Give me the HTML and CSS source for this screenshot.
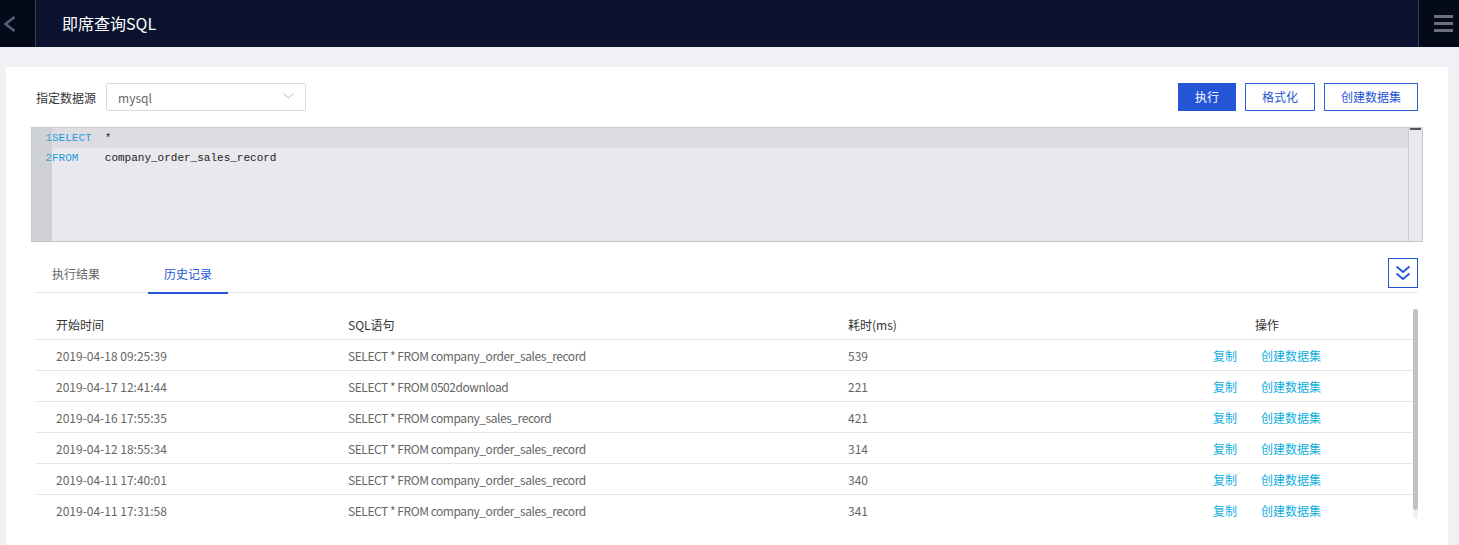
FILE: index.html
```html
<!DOCTYPE html>
<html lang="zh-CN">
<head>
<meta charset="utf-8">
<title>即席查询SQL</title>
<link rel="stylesheet" href="styles.css">
</head>
<body>
<header class="topbar">
  <div class="back">
    <svg width="13" height="16" viewBox="0 0 13 16"><path d="M11.5 1 L2.5 8 L11.5 15" fill="none" stroke="#5b6172" stroke-width="2.4"/></svg>
  </div>
  <h1 class="title">即席查询SQL</h1>
  <div class="menu"><span></span><span></span><span></span></div>
</header>
<main class="page">
  <section class="panel">
    <div class="toolbar">
      <span class="ds-label">指定数据源</span>
      <div class="select">
        <span class="select-value">mysql</span>
        <svg class="select-arrow" width="11" height="6" viewBox="0 0 11 6"><path d="M0.5 0.5 L5.5 5 L10.5 0.5" fill="none" stroke="#b8b8b8" stroke-width="1"/></svg>
      </div>
      <div class="actions">
        <button class="btn btn-primary">执行</button>
        <button class="btn">格式化</button>
        <button class="btn">创建数据集</button>
      </div>
    </div>

    <div class="editor">
      <div class="gutter">
        <div class="ln">1</div>
        <div class="ln">2</div>
      </div>
      <div class="code">
        <div class="line active"><span class="kw">SELECT</span>  *</div>
        <div class="line"><span class="kw">FROM</span>    company_order_sales_record</div>
      </div>
      <div class="editor-scroll"><div class="editor-thumb"></div></div>
    </div>

    <div class="tabs">
      <div class="tab">执行结果</div>
      <div class="tab tab-active">历史记录</div>
      <button class="collapse">
        <svg width="16" height="16" viewBox="0 0 16 16"><path d="M1.5 1.5 L8 7 L14.5 1.5 M1.5 8.5 L8 14 L14.5 8.5" fill="none" stroke="#2355d6" stroke-width="1.8"/></svg>
      </button>
    </div>

    <div class="table-wrap">
      <div class="table">
        <div class="row head">
          <div class="c">开始时间</div>
          <div class="c">SQL语句</div>
          <div class="c">耗时(ms)</div>
          <div class="c ops">操作</div>
        </div>
        <div class="row">
          <div class="c">2019-04-18 09:25:39</div>
          <div class="c sql">SELECT * FROM company_order_sales_record</div>
          <div class="c">539</div>
          <div class="c ops"><a>复制</a><a>创建数据集</a></div>
        </div>
        <div class="row">
          <div class="c">2019-04-17 12:41:44</div>
          <div class="c sql">SELECT * FROM 0502download</div>
          <div class="c">221</div>
          <div class="c ops"><a>复制</a><a>创建数据集</a></div>
        </div>
        <div class="row">
          <div class="c">2019-04-16 17:55:35</div>
          <div class="c sql">SELECT * FROM company_sales_record</div>
          <div class="c">421</div>
          <div class="c ops"><a>复制</a><a>创建数据集</a></div>
        </div>
        <div class="row">
          <div class="c">2019-04-12 18:55:34</div>
          <div class="c sql">SELECT * FROM company_order_sales_record</div>
          <div class="c">314</div>
          <div class="c ops"><a>复制</a><a>创建数据集</a></div>
        </div>
        <div class="row">
          <div class="c">2019-04-11 17:40:01</div>
          <div class="c sql">SELECT * FROM company_order_sales_record</div>
          <div class="c">340</div>
          <div class="c ops"><a>复制</a><a>创建数据集</a></div>
        </div>
        <div class="row">
          <div class="c">2019-04-11 17:31:58</div>
          <div class="c sql">SELECT * FROM company_order_sales_record</div>
          <div class="c">341</div>
          <div class="c ops"><a>复制</a><a>创建数据集</a></div>
        </div>
      </div>
      <div class="vbar"><div class="vthumb"></div></div>
    </div>
  </section>
</main>
</body>
</html>
```

FILE: styles.css
```css
* { box-sizing: border-box; }

html, body {
  margin: 0;
  padding: 0;
  height: 100%;
  overflow: hidden;
}

body {
  background: #f0f1f5;
  font-family: "Noto Sans CJK SC", "Noto Sans", "Liberation Sans", sans-serif;
  font-size: 12px;
  color: #666;
}

/* top bar */
.topbar {
  display: flex;
  align-items: stretch;
  height: 47px;
  background: #0b1331;
}

.back {
  width: 36px;
  background: #050a1b;
  border-right: 1px solid #3a3f52;
  display: flex;
  align-items: center;
  justify-content: flex-start;
  padding-left: 3px;
}

.title {
  margin: 0 0 0 26px;
  font-size: 16px;
  font-weight: normal;
  color: #fff;
  line-height: 47px;
  flex: 1;
}

.menu {
  width: 41px;
  background: #050a1b;
  border-left: 1px solid #3a3f52;
  display: flex;
  flex-direction: column;
  justify-content: center;
  gap: 4px;
  padding-left: 15px;
}

.menu span {
  display: block;
  width: 19px;
  height: 3px;
  background: #6c707b;
}

/* page */
.page {
  padding: 20px 11px 0 6px;
  height: calc(100% - 47px);
}

.panel {
  background: #fff;
  height: 100%;
  padding: 16px 30px 0 30px;
}

/* toolbar */
.toolbar {
  display: flex;
  align-items: center;
  height: 28px;
}

.ds-label {
  color: #333;
  font-size: 12px;
  margin-right: 10px;
}

.select {
  width: 200px;
  height: 28px;
  border: 1px solid #dcdcdc;
  border-radius: 2px;
  display: flex;
  align-items: center;
  justify-content: space-between;
  padding: 0 11px 0 11px;
}

.select-value {
  color: #666;
  font-size: 12px;
}

.select-arrow { margin-top: -3px; }

.actions {
  margin-left: auto;
  display: flex;
  gap: 9px;
}

.btn {
  height: 28px;
  padding: 0 16px;
  border: 1px solid #2f5fdc;
  background: #fff;
  color: #2355d6;
  font-family: inherit;
  font-size: 12px;
  line-height: 26px;
  cursor: pointer;
}

.btn-primary {
  background: #2355d6;
  color: #fff;
  border-color: #2355d6;
}

/* editor */
.editor {
  margin: 16px -5px 0 -5px;
  height: 115px;
  border: 1px solid #c9c9cc;
  border-bottom-color: #c4c4c8;
  background: #e8e8ed;
  display: flex;
  font-family: "Liberation Mono", "DejaVu Sans Mono", monospace;
  font-size: 11px;
}

.gutter {
  width: 20px;
  background: #d0d1d5;
  text-align: right;
}

.ln {
  height: 20px;
  line-height: 21px;
  color: #3aa0d4;
}

.code {
  flex: 1;
}

.line {
  height: 20px;
  line-height: 21px;
  white-space: pre;
  color: #222;
}

.line.active { background: #dddce1; }

.kw { color: #1f9be0; }

.editor-scroll {
  width: 14px;
  border-left: 1px solid #c9c9cc;
  background: #e8e8ed;
  padding: 0 1px;
}

.editor-thumb {
  height: 2px;
  background: #555;
}

/* tabs */
.tabs {
  margin-top: 16px;
  display: flex;
  align-items: flex-start;
  height: 35px;
  border-bottom: 1px solid #e6e6e6;
}

.tab {
  position: relative;
  width: 80px;
  height: 34px;
  line-height: 32px;
  text-align: center;
  color: #666;
  font-size: 12px;
}

.tab + .tab { margin-left: 32px; }

.tab-active { color: #2355d6; }

.tab-active::after {
  content: "";
  position: absolute;
  left: 0;
  right: 0;
  bottom: -2px;
  height: 2px;
  background: #2355d6;
}

.collapse {
  margin-left: auto;
  width: 30px;
  height: 30px;
  border: 1px solid #2355d6;
  background: #fff;
  padding: 0;
  display: flex;
  align-items: center;
  justify-content: center;
}

/* table */
.table-wrap {
  margin-top: 16px;
  height: 210px;
  display: flex;
  overflow: hidden;
}

.table {
  flex: 1;
}

.row {
  display: grid;
  grid-template-columns: 292px 500px 293px 1fr;
  height: 31px;
  border-bottom: 1px solid #e6e6e6;
  align-items: center;
}

.c {
  padding-left: 20px;
  color: #666;
  white-space: nowrap;
}

.c.sql { letter-spacing: -0.45px; }

.head .c { color: #333; }

.c.ops {
  padding-left: 0;
  text-align: center;
  display: flex;
  justify-content: center;
  gap: 24px;
}

.c.ops a {
  color: #11aee0;
  cursor: pointer;
}

.row:last-child { border-bottom: none; }

.vbar {
  width: 5px;
  background: #f1f1f1;
  border-radius: 3px;
}

.vthumb {
  height: 201px;
  background: #c1c1c1;
  border-radius: 3px;
}
```
